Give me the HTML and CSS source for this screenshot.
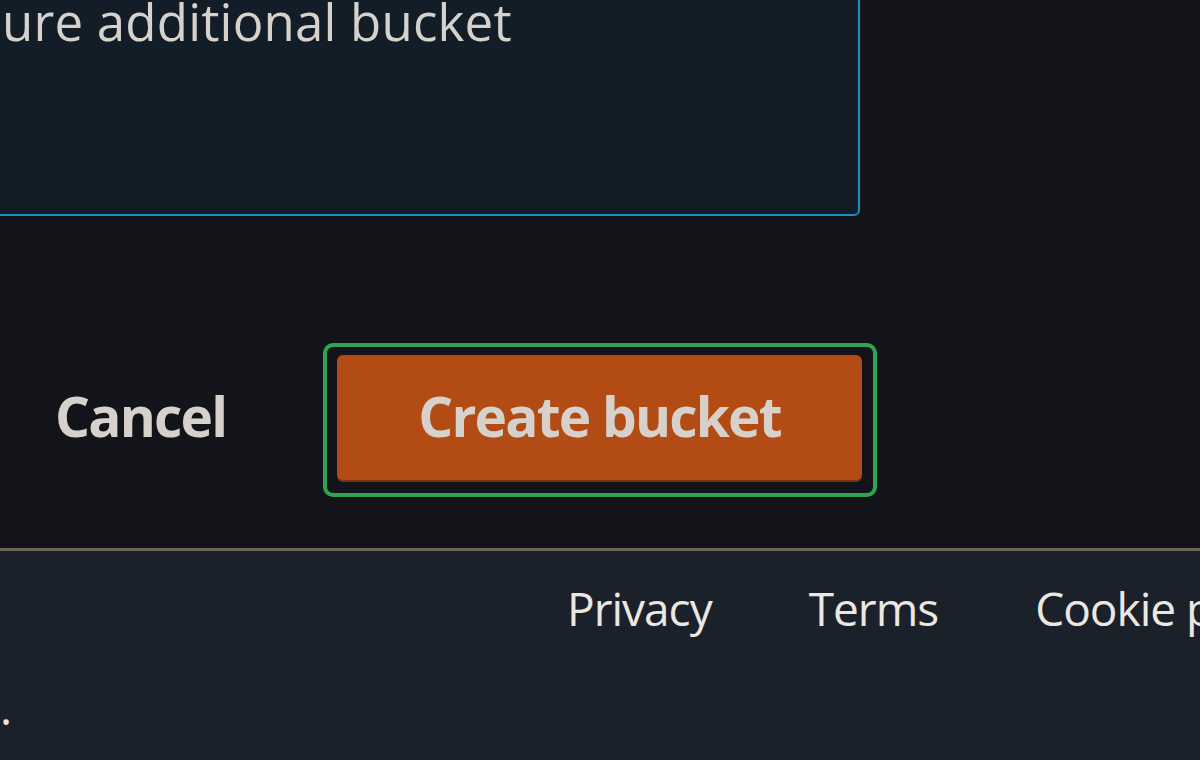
FILE: index.html
```html
<!DOCTYPE html>
<html lang="en">
<head>
<meta charset="utf-8">
<title>Create bucket</title>
<link rel="stylesheet" href="styles.css">
</head>
<body>
<div class="page">
  <main class="main">
    <section class="panel">
      <p class="panel-text">ure additional bucket</p>
    </section>
    <div class="actions">
      <a class="cancel" href="#">Cancel</a>
      <div class="focus-ring">
        <button class="primary" type="button">Create bucket</button>
      </div>
    </div>
  </main>
  <footer class="footer">
    <nav class="footer-links">
      <a href="#">Privacy</a>
      <a href="#">Terms</a>
      <a href="#">Cookie p</a>
    </nav>
    <p class="copyright">.</p>
  </footer>
</div>
</body>
</html>
```
FILE: styles.css
```css
* { box-sizing: border-box; }
html, body {
  margin: 0;
  padding: 0;
  background: #131419;
}
body {
  width: 1200px;
  height: 760px;
  overflow: hidden;
  font-family: "Open Sans", "Noto Sans", sans-serif;
  color: #d6d2cb;
}
.page {
  display: flex;
  flex-direction: column;
  height: 760px;
}
.main {
  height: 548px;
  display: flex;
  flex-direction: column;
}
.panel {
  margin: -30px 0 0 -10px;
  width: 870px;
  height: 246px;
  background: #121d27;
  border: 2px solid #1e8ec2;
  border-bottom-right-radius: 6px;
  padding: 14px 0 0 10px;
}
.panel-text {
  margin: 0;
  font-size: 51px;
  line-height: 70px;
  color: #d6d2cb;
  letter-spacing: 0.2px;
}
.actions {
  display: flex;
  align-items: center;
  margin-top: 127px;
  padding-left: 55px;
}
.cancel {
  font-size: 55px;
  font-weight: 700;
  color: #d6d2cb;
  text-decoration: none;
  width: 268px;
  letter-spacing: -1.8px;
  padding-bottom: 9px;
}
.focus-ring {
  border: 4px solid #2ea353;
  border-radius: 10px;
  padding: 8px 11px 13px 10px;
  width: 554px;
  height: 154px;
}
.primary {
  width: 100%;
  height: 125px;
  background: #b34b14;
  border: none;
  border-radius: 6px;
  font-family: "Open Sans", "Noto Sans", sans-serif;
  font-size: 55px;
  font-weight: 700;
  color: #d6d2cb;
  letter-spacing: -1.8px;
  box-shadow: 0 2px 0 #7a3411;
  padding: 0 0 4px 0;
}
.footer {
  flex: 1;
  background: #1b212b;
  border-top: 3px solid #6d645a;
  display: flex;
  flex-direction: column;
}
.footer-links {
  display: flex;
  gap: 97px;
  padding-left: 567px;
  margin-top: 27px;
  white-space: nowrap;
}
.footer-links a {
  font-size: 46px;
  line-height: 60px;
  color: #ebe7e1;
  text-decoration: none;
  letter-spacing: -1px;
}
.copyright {
  margin: 44px 0 0 0;
  font-size: 46px;
  color: #ebe7e1;
  line-height: 50px;
}
```
